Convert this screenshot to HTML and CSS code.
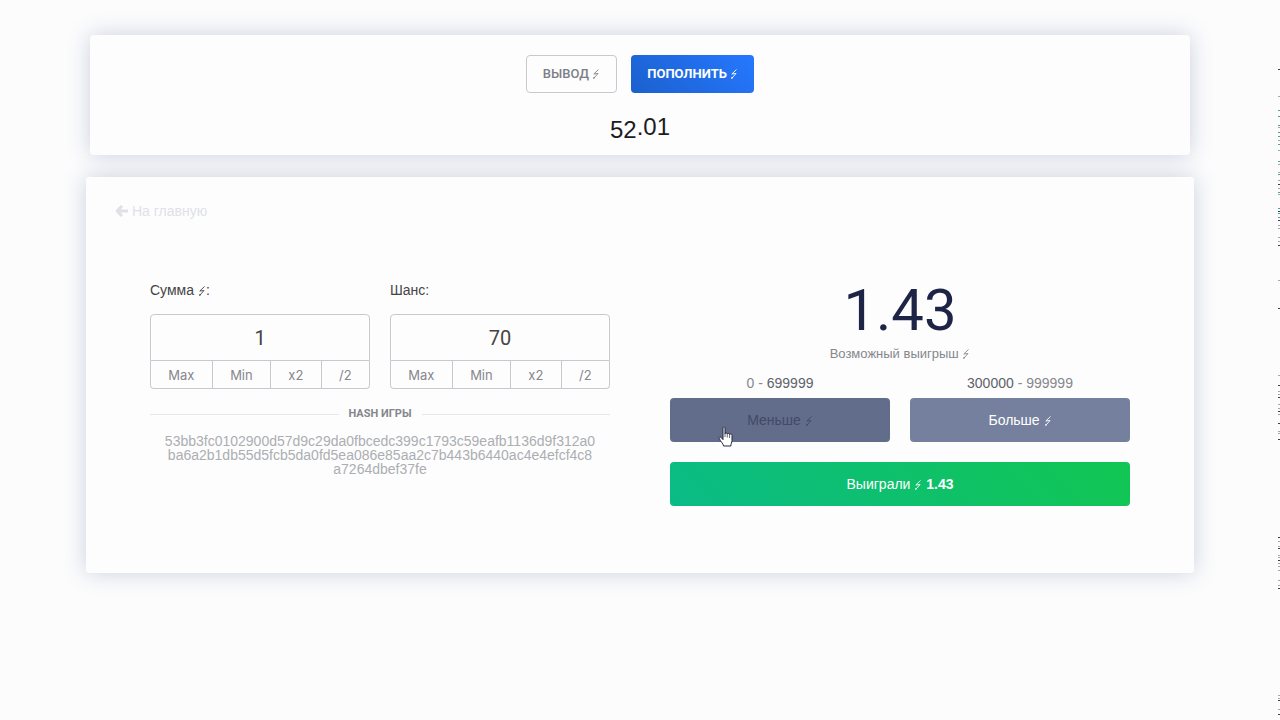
FILE: index.html
```
<!DOCTYPE html>
<html lang="ru">
<head>
<meta charset="utf-8">
<title>Игра</title>
<link rel="stylesheet" href="styles.css">
</head>
<body>
<svg class="defs" aria-hidden="true">
  <symbol id="bolt" viewBox="0 0 8 12"><path d="M6.500 1.500 1.800 6 6 5.500 1.800 10.300" fill="none" stroke="currentColor" stroke-width=".9" stroke-linejoin="round"/><path d="M1.200 11 1.500 8.800 3.200 10Z" fill="currentColor"/></symbol>
</svg>
<main class="page">
  <section class="card wallet">
    <div class="actions">
      <button class="btn outline" type="button">ВЫВОД <svg class="bolt"><use href="#bolt"/></svg></button>
      <button class="btn primary" type="button">ПОПОЛНИТЬ <svg class="bolt"><use href="#bolt"/></svg></button>
    </div>
    <div class="balance"><span>52</span><span class="rolling">.01</span></div>
  </section>

  <section class="card game">
    <a class="back" href="#"><svg class="arrow" viewBox="0 0 12 12"><path d="M6 1 1 6l5 5M1 6h11" fill="none" stroke="currentColor" stroke-width="3"/></svg>На главную</a>
    <div class="board">
      <div class="bet">
        <div class="fields">
          <div class="field">
            <label for="sum">Сумма <svg class="bolt"><use href="#bolt"/></svg>:</label>
            <input id="sum" type="text" value="1">
            <div class="quick"><button type="button">Max</button><button type="button">Min</button><button type="button">x2</button><button type="button">/2</button></div>
          </div>
          <div class="field">
            <label for="chance">Шанс:</label>
            <input id="chance" type="text" value="70">
            <div class="quick"><button type="button">Max</button><button type="button">Min</button><button type="button">x2</button><button type="button">/2</button></div>
          </div>
        </div>
        <h2 class="divider">HASH ИГРЫ</h2>
        <p class="hash">53bb3fc0102900d57d9c29da0fbcedc399c1793c59eafb1136d9f312a0ba6a2b1db55d5fcb5da0fd5ea086e85aa2c7b443b6440ac4e4efcf4c8a7264dbef37fe</p>
      </div>
      <div class="result">
        <div class="prize">1.43</div>
        <div class="caption">Возможный выигрыш <svg class="bolt"><use href="#bolt"/></svg></div>
        <div class="choices">
          <div class="choice">
            <div class="range">0 - <span>699999</span></div>
            <button class="bar less" type="button">Меньше <svg class="bolt"><use href="#bolt"/></svg>
              <svg class="pointer" viewBox="0 0 16 22"><path d="M5 1.8C5 .5 7 .5 7 1.8V8c0-1.2 2.3-1.2 2.3.2 0-1.1 2.3-1 2.3.4 0-.9 2.4-.8 2.4.7v5.2c0 2-1.2 3-1.2 5.5H5.6c0-2-3.2-4.6-4.4-7.6-.5-1.4 1-2 1.9-.9L5 13.600Z" fill="#fff" stroke="#222838" stroke-width="1"/><path d="M7 8v3M9.300 8.500v3M11.600 9v3" stroke="#222838" stroke-width=".7"/></svg>
            </button>
          </div>
          <div class="choice">
            <div class="range"><span>300000</span> - 999999</div>
            <button class="bar more" type="button">Больше <svg class="bolt"><use href="#bolt"/></svg></button>
          </div>
        </div>
        <div class="bar won" role="status">Выиграли <svg class="bolt"><use href="#bolt"/></svg> <b>1.43</b></div>
      </div>
    </div>
  </section>
</main>
<svg class="edge" viewBox="0 0 2 720" preserveAspectRatio="none" aria-hidden="true">
  <path stroke="#39404a" stroke-width="1" d="M0 69.500h2M0 184.500h2M0 211.500h2M0 220.500h2M0 245.500h2M0 308.500h2M0 385.500h2M0 397.500h2M0 411.500h2M0 423.500h2M0 439.500h2M0 537.500h2M0 548.500h2M0 560.500h2M0 588.500h2M0 700.500h2M0 714.500h2"/>
  <path stroke="#589e9d" stroke-width="1" d="M0 110.500h2M0 116.500h2M0 125.500h2M0 132.500h2M0 136.500h2M0 144.500h2M0 161.500h2M0 174.500h2M0 192.500h2M0 208.500h2M0 213.500h2M0 217.500h2"/>
  <path stroke="#a3a8ae" stroke-width="1" d="M0 96.500h2M0 127.500h2M0 140.500h2M0 150.500h2M0 164.500h2M0 172.500h2M0 180.500h2M0 188.500h2M0 194.500h2M0 225.500h2M0 228.500h2M0 237.500h2M0 241.500h2M0 280.500h2M0 375.500h2M0 391.500h2M0 394.500h2M0 404.500h2M0 408.500h2M0 414.500h2M0 431.500h2M0 433.500h2M0 541.500h2M0 546.500h2M0 555.500h2M0 557.500h2M0 563.500h2M0 566.500h2M0 570.500h2M0 580.500h2M0 585.500h2M0 695.500h2M0 698.500h2M0 709.500h2"/>
</svg>
</body>
</html>
```
FILE: styles.css
```
* { box-sizing: border-box; }
body {
  margin: 0;
  min-height: 100vh;
  background: #fcfcfd;
  color: #444;
  font: 14px/20px "Liberation Sans", Arial, sans-serif;
}
button, input { font: inherit; color: inherit; margin: 0; }
button { cursor: pointer; }
.defs { position: absolute; width: 0; height: 0; }
.bolt { width: 8px; height: 12px; vertical-align: -2px; }

.page {
  display: flex;
  flex-direction: column;
  align-items: center;
  gap: 22px;
  padding: 35px 16px;
}
.card {
  width: 100%;
  background: #fdfdfe;
  border-radius: 4px;
  box-shadow: 0 0 22px rgba(60, 85, 130, .26);
}
.wallet { max-width: 1100px; padding: 20px 20px 10px; }
.game { max-width: 1108px; padding: 24px 30px 67px; border-radius: 3px; }

.actions { display: flex; justify-content: center; gap: 14px; }
.btn {
  height: 38px;
  padding: 0 15px;
  border: 1px solid #c6c9cf;
  border-radius: 4px;
  background: #fdfdfe;
  font: 500 13px/20px Roboto, sans-serif;
}
.outline { padding: 0 16px; color: #7c7f85; }
.primary {
  border-color: transparent;
  background: linear-gradient(45deg, #1b60ce, #2678ff) border-box;
  color: #fff;
  font-weight: 700;
}
.balance {
  margin-top: 18px;
  text-align: center;
  font-size: 24px;
  line-height: 31px;
  color: #1c1c1e;
}
.rolling { vertical-align: 3px; }

.back {
  display: flex;
  align-items: center;
  gap: 4px;
  width: fit-content;
  color: #dfe1e6;
  text-decoration: none;
}
.arrow { width: 12px; height: 12px; }

.board {
  display: grid;
  grid-template-columns: 1fr 1fr;
  gap: 60px;
  padding: 59px 34px 0;
}
.fields { display: grid; grid-template-columns: 1fr 1fr; gap: 20px; }
.field label { display: block; margin-bottom: 14px; }
.field input {
  display: block;
  width: 100%;
  height: 47px;
  border: 1px solid #c6c9cf;
  border-radius: 4px 4px 0 0;
  background: #fdfdfe;
  text-align: center;
  font: 20px/24px Roboto, sans-serif;
}
.quick {
  display: flex;
  border: 1px solid #c6c9cf;
  border-top: 0;
  border-radius: 0 0 4px 4px;
}
.quick button {
  flex: 1 1 auto;
  height: 27px;
  padding: 0 12px;
  border: 0;
  border-left: 1px solid #c6c9cf;
  background: none;
  color: #85878c;
  font: 13px/20px Inter, sans-serif;
}
.quick button:first-child { border-left: 0; }

.divider {
  display: flex;
  align-items: center;
  gap: 10px;
  margin: 15px 0 10px;
  color: #85878c;
  font: 700 11px/20px Roboto, sans-serif;
}
.divider::before, .divider::after { content: ""; flex: 1; height: 1px; background: #e6e7ea; }
.hash {
  margin: 0;
  padding: 0 14px;
  color: #acaeb2;
  line-height: 14px;
  text-align: center;
  word-break: break-all;
}

.result { text-align: center; }
.prize { color: #1d2445; font: 58px/60px Roboto, sans-serif; }
.caption { margin-top: 4px; color: #85878c; font-size: 13px; }
.choices { display: grid; grid-template-columns: 1fr 1fr; gap: 20px; margin: 9px 0 20px; }
.range { margin-bottom: 5px; color: #85878c; }
.range span { color: #606268; }
.bar {
  display: block;
  position: relative;
  width: 100%;
  padding: 12px;
  border: 0;
  border-radius: 4px;
  color: #fff;
  line-height: 20px;
}
.less { background: #626d8b; color: #414a66; }
.more { background: #75809e; }
.won { background: linear-gradient(45deg, #0abb87, #11c651); }
.pointer { position: absolute; left: 22%; top: 28px; width: 16px; height: 22px; }
.edge { position: absolute; top: 0; right: 0; width: 2px; height: 720px; }
```
